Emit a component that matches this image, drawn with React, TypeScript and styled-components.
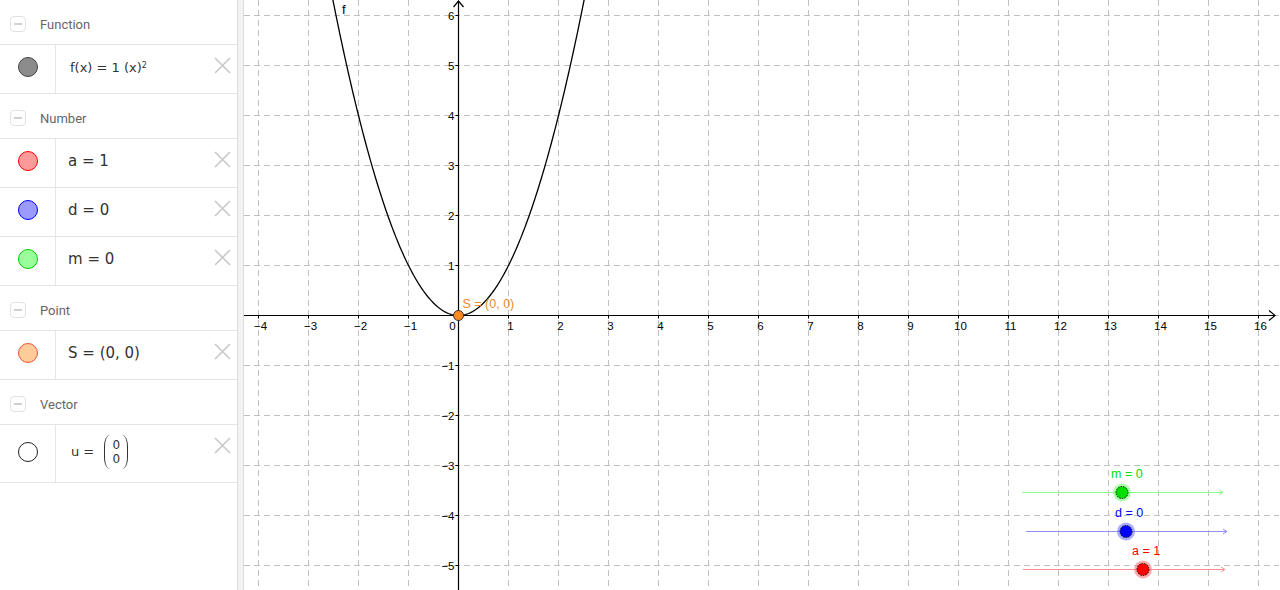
import React from 'react';
import styled, { createGlobalStyle } from 'styled-components';

const GlobalStyle = createGlobalStyle`
  html, body, #root {
    margin: 0;
    height: 100%;
    overflow: hidden;
  }
  body {
    background: #fff;
    font-family: Roboto, "Liberation Sans", sans-serif;
  }
`;

const Layout = styled.div`
  display: flex;
  height: 590px;
  width: 1280px;
`;

const Sidebar = styled.aside`
  width: 237px;
  flex: 0 0 237px;
  display: flex;
  flex-direction: column;
  background: #fff;
`;

const Splitter = styled.div`
  width: 5px;
  flex: 0 0 5px;
  background: #f3f3f3;
  border-left: 1px solid #dcdcdc;
  border-right: 1px solid #dcdcdc;
`;

const GroupHeader = styled.div`
  display: flex;
  align-items: center;
  box-sizing: border-box;
  height: 45px;
  padding: 4px 0 0 10px;
  border-bottom: 1px solid #e4e4e4;
`;

const MinusBox = styled.span`
  width: 16px;
  height: 16px;
  box-sizing: border-box;
  border: 1px solid #e2e2e2;
  border-radius: 4px;
  display: flex;
  align-items: center;
  justify-content: center;
  margin-right: 14px;

  &::after {
    content: '';
    width: 8px;
    height: 2px;
    background: #d0d0d0;
  }
`;

const GroupTitle = styled.span`
  font-size: 13px;
  color: #666;
`;

const ItemRow = styled.div<{ $tall?: boolean }>`
  display: flex;
  align-items: center;
  box-sizing: border-box;
  height: ${(p) => (p.$tall ? 58 : 49)}px;
  border-bottom: 1px solid #e4e4e4;
`;

const MarbleCell = styled.div`
  width: 56px;
  flex: 0 0 56px;
  align-self: stretch;
  box-sizing: border-box;
  border-right: 1px solid #e4e4e4;
  display: flex;
  align-items: center;
  justify-content: center;
  padding-bottom: 4px;
`;

const Marble = styled.span<{ $fill: string; $stroke: string }>`
  width: 20px;
  height: 20px;
  box-sizing: border-box;
  border-radius: 50%;
  background: ${(p) => p.$fill};
  border: 1px solid ${(p) => p.$stroke};
`;

const Formula = styled.div<{ $small?: boolean; $indent?: number }>`
  flex: 1;
  display: flex;
  align-items: center;
  padding-left: ${(p) => p.$indent ?? 12}px;
  padding-bottom: 4px;
  font-family: "DejaVu Sans", "Liberation Sans", sans-serif;
  font-size: ${(p) => (p.$small ? 13 : 15)}px;
  color: #333;
  white-space: pre;
`;

const Sup = styled.sup`
  font-size: 8px;
  position: relative;
  top: -2px;
`;

const VectorBox = styled.span`
  display: inline-flex;
  align-items: center;
  margin-left: 6px;
`;

const Paren = styled.span<{ $right?: boolean }>`
  width: 6px;
  height: 34px;
  box-sizing: border-box;
  border: 0 solid #333;
  ${(p) =>
    p.$right
      ? 'border-right-width: 1.4px; border-radius: 0 9px 9px 0 / 0 17px 17px 0;'
      : 'border-left-width: 1.4px; border-radius: 9px 0 0 9px / 17px 0 0 17px;'}
`;

const VectorCol = styled.span`
  display: flex;
  flex-direction: column;
  align-items: center;
  font-size: 12px;
  line-height: 14px;
  padding: 0 2px;
`;

const DeleteButton = styled.button`
  align-self: flex-start;
  margin: 12px 6px 0 0;
  padding: 0;
  border: none;
  background: none;
  width: 17px;
  height: 17px;
  display: flex;
`;

const GraphPanel = styled.div`
  flex: 1;
  position: relative;
  background: #fff;
  overflow: hidden;
`;

const Canvas = styled.svg`
  display: block;
  font-family: "Liberation Sans", Arial, sans-serif;
`;

const CloseIcon = () => (
  <svg width="17" height="17" viewBox="0 0 17 17">
    <path d="M1 1 L16 16 M16 1 L1 16" stroke="#c8c8c8" strokeWidth="1.6" fill="none" />
  </svg>
);

type Item = {
  fill: string;
  stroke: string;
  content: React.ReactNode;
  small?: boolean;
  tall?: boolean;
  indent?: number;
};

const groups: { title: string; items: Item[] }[] = [
  {
    title: 'Function',
    items: [
      {
        fill: '#8c8c8c',
        stroke: '#444',
        small: true,
        indent: 14,
        content: (
          <>
            f(x) = 1 (x)<Sup>2</Sup>
          </>
        ),
      },
    ],
  },
  {
    title: 'Number',
    items: [
      { fill: '#ff9a9a', stroke: '#f00', content: 'a = 1' },
      { fill: '#9a9aff', stroke: '#00f', content: 'd = 0' },
      { fill: '#9aff9a', stroke: '#0c0', content: 'm = 0' },
    ],
  },
  {
    title: 'Point',
    items: [{ fill: '#ffcc99', stroke: '#e8553a', content: 'S = (0, 0)' }],
  },
  {
    title: 'Vector',
    items: [
      {
        fill: '#fff',
        stroke: '#222',
        tall: true,
        small: true,
        indent: 15,
        content: (
          <>
            u ={' '}
            <VectorBox>
              <Paren />
              <VectorCol>
                <span>0</span>
                <span>0</span>
              </VectorCol>
              <Paren $right />
            </VectorBox>
          </>
        ),
      },
    ],
  },
];

// graph geometry (local to the panel)
const W = 1035;
const H = 590;
const OX = 214.5;
const OY = 315.5;
const U = 50;

const range = (a: number, b: number) => Array.from({ length: b - a + 1 }, (_, i) => a + i);

const parabola = (() => {
  const pts: string[] = [];
  for (let x = -2.6; x <= 2.6001; x += 0.02) {
    pts.push(`${(OX + x * U).toFixed(2)},${(OY - x * x * U).toFixed(2)}`);
  }
  return 'M' + pts.join(' L');
})();

const sliders = [
  { label: 'm = 0', color: '#00e000', line: '#8cff8c', halo: '#66ff66', y: 492.5, x1: 778, x2: 979, px: 878, lx: 867 },
  { label: 'd = 0', color: '#0000ff', line: '#9090ff', halo: '#6666ff', y: 531.5, x1: 782, x2: 983, px: 882, lx: 871 },
  { label: 'a = 1', color: '#ff0000', line: '#ff9090', halo: '#ff6666', y: 569.5, x1: 779, x2: 981, px: 899, lx: 888 },
];

const minus = (n: number) => (n < 0 ? `\u2212${-n}` : `${n}`);

function Graph() {
  return (
    <Canvas width={W} height={H} viewBox={`0 0 ${W} ${H}`}>
      <g stroke="#c0c0c0" strokeWidth="1" strokeDasharray="6,4">
        {range(-4, 16).map((k) => (
          <line key={`v${k}`} x1={OX + k * U} y1={0} x2={OX + k * U} y2={H} />
        ))}
        {range(-6, 5).map((k) => (
          <line key={`h${k}`} x1={0} y1={OY + k * U} x2={W} y2={OY + k * U} />
        ))}
      </g>

      <g stroke="#000" strokeWidth="1.2" fill="none">
        <line x1={0} y1={OY} x2={1031} y2={OY} />
        <path d={`M1025,${OY - 5} L1031,${OY} L1025,${OY + 5}`} />
        <line x1={OX} y1={1} x2={OX} y2={H} />
        <path d={`M${OX - 5},7 L${OX},1 L${OX + 5},7`} />
        {range(-4, 16).filter((k) => k !== 0).map((k) => (
          <line key={`tx${k}`} x1={OX + k * U} y1={OY} x2={OX + k * U} y2={OY + 3} strokeWidth="1" />
        ))}
        {range(-5, 6).filter((k) => k !== 0).map((k) => (
          <line key={`ty${k}`} x1={OX - 3} y1={OY - k * U} x2={OX} y2={OY - k * U} strokeWidth="1" />
        ))}
      </g>

      <g fontSize="11.5" fill="#000">
        {range(-4, 16).filter((k) => k !== 0).map((k) => (
          <text key={`lx${k}`} x={OX + k * U + (k < 0 ? 2 : 2)} y={OY + 14} textAnchor="middle">
            {minus(k)}
          </text>
        ))}
        <text x={OX - 6} y={OY + 14} textAnchor="middle">0</text>
        {range(-5, 6).filter((k) => k !== 0).map((k) => (
          <text key={`ly${k}`} x={OX - 4} y={OY - k * U + 4} textAnchor="end">
            {minus(k)}
          </text>
        ))}
      </g>

      <path d={parabola} stroke="#000" strokeWidth="1.3" fill="none" />
      <text x={98} y={14} fontSize="13" fill="#000">f</text>

      <circle cx={OX} cy={OY} r={5} fill="#ff8a1f" stroke="#222" strokeWidth="0.9" />
      <text x={OX + 4} y={OY - 8} fontSize="12.5" fill="#f08a24">S = (0, 0)</text>

      {sliders.map((s) => (
        <g key={s.label}>
          <line x1={s.x1} y1={s.y} x2={s.x2} y2={s.y} stroke={s.line} strokeWidth="1" />
          <path d={`M${s.x2 - 4},${s.y - 2.5} L${s.x2},${s.y} L${s.x2 - 4},${s.y + 2.5}`} stroke={s.line} fill="none" />
          <circle cx={s.px} cy={s.y} r={9} fill={s.halo} opacity={0.55} />
          <circle cx={s.px} cy={s.y} r={6} fill={s.color} stroke="#000" strokeWidth="0.9" strokeDasharray="1.6,1" />
          <text x={s.lx} y={s.y - 15} fontSize="12.5" fill={s.color}>{s.label}</text>
        </g>
      ))}
    </Canvas>
  );
}

export default function App() {
  return (
    <>
      <GlobalStyle />
      <Layout>
        <Sidebar>
          {groups.map((g) => (
            <React.Fragment key={g.title}>
              <GroupHeader>
                <MinusBox />
                <GroupTitle>{g.title}</GroupTitle>
              </GroupHeader>
              {g.items.map((it, i) => (
                <ItemRow key={i} $tall={it.tall}>
                  <MarbleCell>
                    <Marble $fill={it.fill} $stroke={it.stroke} />
                  </MarbleCell>
                  <Formula $small={it.small} $indent={it.indent}>{it.content}</Formula>
                  <DeleteButton aria-label="delete">
                    <CloseIcon />
                  </DeleteButton>
                </ItemRow>
              ))}
            </React.Fragment>
          ))}
        </Sidebar>
        <Splitter />
        <GraphPanel>
          <Graph />
        </GraphPanel>
      </Layout>
    </>
  );
}
